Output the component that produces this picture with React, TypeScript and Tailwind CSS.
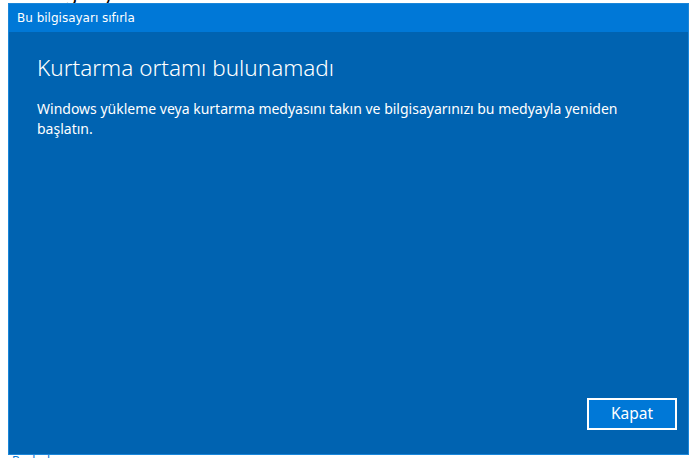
export default function App() {
  return (
    <div className="w-[690px] h-[458px] bg-white overflow-hidden" style={{ fontFamily: '"Noto Sans", "Open Sans", sans-serif' }}>
      <div className="h-[3px] overflow-hidden pl-[12px]">
        <div className="-mt-[17px] text-[20px] leading-[20px] text-black">Bu bilgisayarı sıfırla</div>
      </div>
      <div className="ml-[8px] w-[681px] h-[452px] border border-[#1a86d9] flex flex-col">
        <div className="h-[28px] bg-[#0078d7] flex items-center pl-[8px] text-[12px] text-white" style={{ fontFamily: '"DejaVu Sans", sans-serif' }}>
          Bu bilgisayarı sıfırla
        </div>
        <div className="flex-1 bg-[#0063b1] flex flex-col px-[28px] pt-[21px] pb-[24px] text-white">
          <h1 className="text-[22.5px] leading-[30px] font-light">Kurtarma ortamı bulunamadı</h1>
          <p className="mt-[16px] text-[14px] leading-[20px] max-w-[600px]">
            Windows yükleme veya kurtarma medyasını takın ve bilgisayarınızı bu medyayla yeniden başlatın.
          </p>
          <div className="mt-auto flex justify-end -mr-[17px]">
            <button className="w-[90px] h-[32px] border-2 border-white bg-[#0078d7] text-[15.5px] text-white">Kapat</button>
          </div>
        </div>
      </div>
      <div className="h-[3px] overflow-hidden pl-[12px]">
        <div className="text-[12px] leading-[12px] text-[#0078d7]">Başlarken</div>
      </div>
    </div>
  );
}
